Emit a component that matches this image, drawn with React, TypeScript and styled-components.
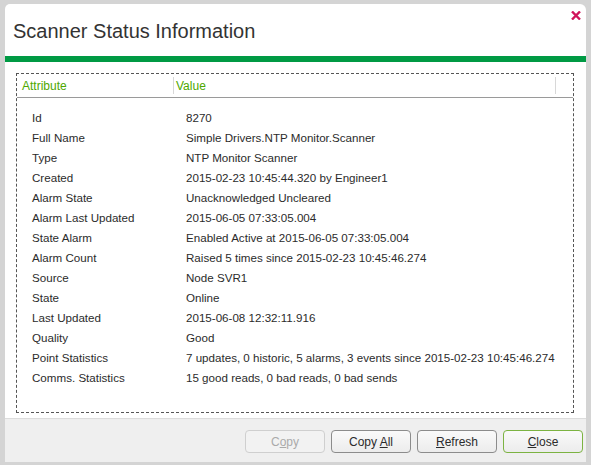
import React from 'react'
import styled, { createGlobalStyle } from 'styled-components'

const GlobalStyle = createGlobalStyle`
  html, body {
    margin: 0;
    padding: 0;
    background: #d4d4d4;
  }
  body {
    font-family: "Liberation Sans", Arial, sans-serif;
  }
`

const Dialog = styled.div`
  margin: 4px 5px 0 5px;
  width: 581px;
  height: 458px;
  background: #fff;
  border-radius: 5px 6px 0 0;
  display: flex;
  flex-direction: column;
  overflow: hidden;
`

const TitleBar = styled.div`
  position: relative;
  height: 52px;
  display: flex;
  align-items: center;
  padding-left: 8px;
  border-bottom: 6px solid #009a44;
`

const Title = styled.h1`
  margin: 0;
  font-size: 20px;
  font-weight: normal;
  color: #333;
  padding-top: 2px;
`

const CloseX = styled.button`
  position: absolute;
  top: 7px;
  right: 5px;
  width: 10px;
  height: 9px;
  padding: 0;
  border: 0;
  background: none;
  display: flex;
`

const Body = styled.div`
  flex: 1;
  padding: 11px 12px 5px 11px;
  border-bottom: 1px solid #dcdcdc;
`

const Grid = styled.div`
  height: 100%;
  box-sizing: border-box;
  border: 1px dashed #555;
`

const HeaderRow = styled.div`
  display: flex;
  height: 23px;
  border-bottom: 1px solid #9a9a9a;
  align-items: center;
  font-size: 12px;
  color: #4ea700;
`

const HeaderCell = styled.div<{ $width?: number; $pad: number }>`
  display: flex;
  align-items: center;
  height: 100%;
  box-sizing: border-box;
  padding-left: ${({ $pad }) => $pad}px;
  ${({ $width }) => ($width ? `width: ${$width}px;` : 'flex: 1;')}
  position: relative;
  &.sep::after {
    content: "";
    position: absolute;
    right: 0;
    top: 3px;
    bottom: 3px;
    width: 1px;
    background: #d8d8d8;
  }
`

const Rows = styled.div`
  display: grid;
  grid-template-columns: 154px 1fr;
  grid-auto-rows: 20px;
  padding: 9px 0 0 15px;
  font-size: 11.6px;
  color: #2b2b2b;
`

const Cell = styled.div`
  display: flex;
  align-items: center;
  white-space: nowrap;
`

const Footer = styled.div`
  height: 43px;
  background: #efefef;
  display: flex;
  justify-content: flex-end;
  align-items: flex-start;
  gap: 6px;
  padding: 11px 3px 0 0;
  box-sizing: border-box;
`

const Button = styled.button<{ $primary?: boolean }>`
  width: 80px;
  height: 23px;
  box-sizing: border-box;
  border-radius: 4px;
  font-family: "Liberation Sans", Arial, sans-serif;
  font-size: 12px;
  color: ${({ disabled }) => (disabled ? '#aaa' : '#2b2b2b')};
  border: 1px solid ${({ $primary, disabled }) => ($primary ? '#7cb342' : disabled ? '#cfcfcf' : '#8c8c8c')};
  background: ${({ disabled }) => (disabled ? '#f2f2f2' : 'linear-gradient(#fafafa, #ececec)')};
  padding: 0;
  u {
    text-decoration: underline;
  }
`

const rows: [string, string][] = [
  ['Id', '8270'],
  ['Full Name', 'Simple Drivers.NTP Monitor.Scanner'],
  ['Type', 'NTP Monitor Scanner'],
  ['Created', '2015-02-23 10:45:44.320 by Engineer1'],
  ['Alarm State', 'Unacknowledged Uncleared'],
  ['Alarm Last Updated', '2015-06-05 07:33:05.004'],
  ['State Alarm', 'Enabled Active at 2015-06-05 07:33:05.004'],
  ['Alarm Count', 'Raised 5 times since 2015-02-23 10:45:46.274'],
  ['Source', 'Node SVR1'],
  ['State', 'Online'],
  ['Last Updated', '2015-06-08 12:32:11.916'],
  ['Quality', 'Good'],
  ['Point Statistics', '7 updates, 0 historic, 5 alarms, 3 events since 2015-02-23 10:45:46.274'],
  ['Comms. Statistics', '15 good reads, 0 bad reads, 0 bad sends'],
]

export default function App() {
  return (
    <>
      <GlobalStyle />
      <Dialog>
        <TitleBar>
          <Title>Scanner Status Information</Title>
          <CloseX aria-label="Close">
            <svg width="10" height="9" viewBox="0 0 10 9">
              <path d="M1 0.5 L9 8.5 M9 0.5 L1 8.5" stroke="#d0145a" strokeWidth="2.4" />
            </svg>
          </CloseX>
        </TitleBar>
        <Body>
          <Grid>
            <HeaderRow>
              <HeaderCell className="sep" $width={157} $pad={5}>Attribute</HeaderCell>
              <HeaderCell className="sep" $width={382} $pad={2}>Value</HeaderCell>
              <HeaderCell $pad={0} />
            </HeaderRow>
            <Rows>
              {rows.map(([k, v]) => (
                <React.Fragment key={k}>
                  <Cell>{k}</Cell>
                  <Cell>{v}</Cell>
                </React.Fragment>
              ))}
            </Rows>
          </Grid>
        </Body>
        <Footer>
          <Button disabled>C<u>o</u>py</Button>
          <Button>Copy <u>A</u>ll</Button>
          <Button><u>R</u>efresh</Button>
          <Button $primary><u>C</u>lose</Button>
        </Footer>
      </Dialog>
    </>
  )
}
